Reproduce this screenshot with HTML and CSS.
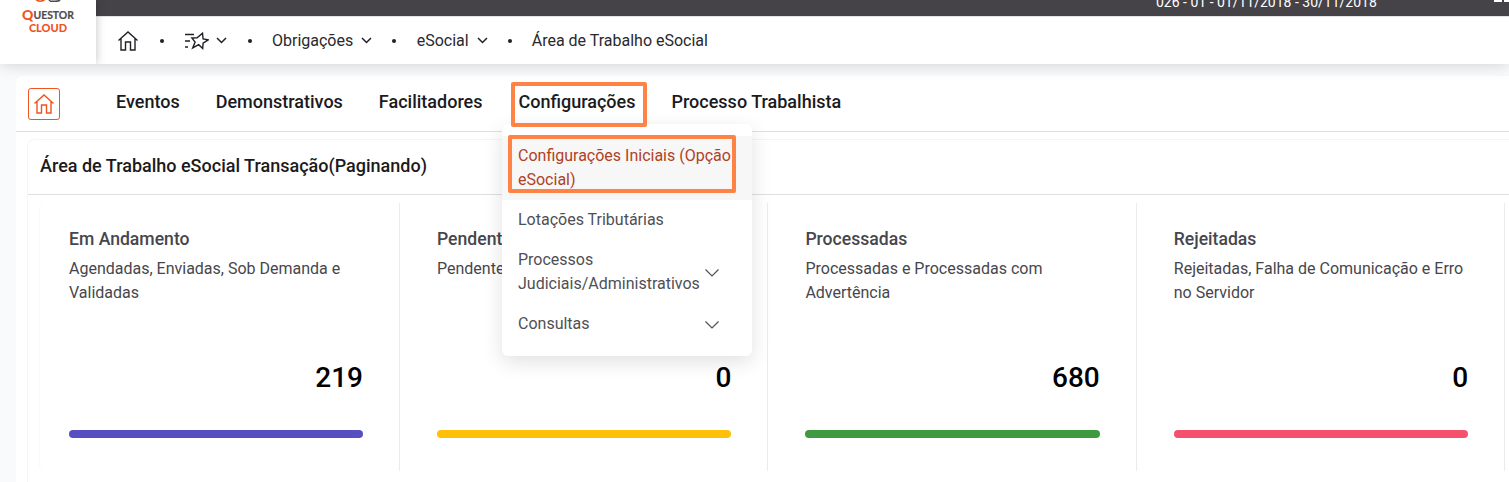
FILE: index.html
```html
<!DOCTYPE html>
<html lang="pt-BR">
<head>
<meta charset="utf-8">
<title>Área de Trabalho eSocial</title>
<link rel="stylesheet" href="styles.css">
</head>
<body>
<div class="page">
  <header class="header">
    <div class="brand">
      <svg class="brand-mark" viewBox="0 0 50 8" width="50" height="8">
        <path d="M12.500 0C14 2.600 20 2.600 22 .3L22 0H18.500Q17 1 16 0Z" fill="#f0531f"/>
        <path d="M26.500 0v1.200M27 1.300h5C36 1.300 36.500.600 37 0" fill="none" stroke="#4d4b52" stroke-width="1.600"/>
      </svg>
      <div class="brand-name"><span class="brand-q">Q</span>UESTOR</div>
      <div class="brand-sub">CLOUD</div>
    </div>
    <div class="header-main">
      <div class="topbar">
        <span class="period">026 - 01 - 01/11/2018 - 30/11/2018</span>
        <svg class="apps" width="15" height="3" viewBox="0 0 15 3"><path d="M0 0h8v2H0zM10 0h5v2h-5z" fill="#fff"/></svg>
      </div>
      <nav class="crumbs">
        <svg class="home" width="22" height="20" viewBox="0 0 22 20"><path d="M1.500 9.500L11 1l9.500 8.500M4 7.500V19h4.500v-8h5v8H18V7.500"/></svg>
        <i class="dot dot-a"></i>
        <svg class="fav" width="25" height="18" viewBox="0 0 25 18"><path d="M1 2.500h9M1 9h5M1 15h3M18.500 1.200l.6 5.800 5 .9-5 3.200-.4 5.400-4-3.800-6 3.200 2.400-5.900-3.200-4 5.200-.2z"/></svg>
        <svg class="chev chev-fav" width="11" height="7" viewBox="0 0 11 7"><path d="M1 1l4.500 4.500L10 1"/></svg>
        <i class="dot dot-b"></i>
        <span>Obrigações</span>
        <svg class="chev" width="11" height="7" viewBox="0 0 11 7"><path d="M1 1l4.500 4.500L10 1"/></svg>
        <i class="dot dot-c"></i>
        <span>eSocial</span>
        <svg class="chev" width="11" height="7" viewBox="0 0 11 7"><path d="M1 1l4.500 4.500L10 1"/></svg>
        <i class="dot dot-d"></i>
        <span>Área de Trabalho eSocial</span>
      </nav>
    </div>
  </header>

  <main class="workspace">
    <nav class="menu">
      <div class="menu-home"><svg class="home" width="22" height="20" viewBox="0 0 22 20"><path d="M1.500 9.500L11 1l9.500 8.500M4 7.500V19h4.500v-8h5v8H18V7.500"/></svg></div>
      <span>Eventos</span>
      <span>Demonstrativos</span>
      <span>Facilitadores</span>
      <div class="menu-open">
        <span>Configurações</span>
        <div class="mark mark-tab"></div>
        <div class="dropdown">
          <div class="option option-active">Configurações Iniciais (Opção eSocial)<div class="mark mark-option"></div></div>
          <div class="option">Lotações Tributárias</div>
          <div class="option option-sub"><span>Processos Judiciais/Administrativos</span>
            <svg class="chev-thin" width="14" height="8" viewBox="0 0 14 8"><path d="M.5.500L7 7 13.500.5"/></svg></div>
          <div class="option option-sub"><span>Consultas</span>
            <svg class="chev-thin" width="14" height="8" viewBox="0 0 14 8"><path d="M.5.500L7 7 13.500.5"/></svg></div>
        </div>
      </div>
      <span>Processo Trabalhista</span>
    </nav>

    <section class="panel">
      <h1 class="panel-title">Área de Trabalho eSocial Transação(Paginando)</h1>
      <div class="cards">
        <article class="card">
          <h2>Em Andamento</h2><p>Agendadas, Enviadas, Sob Demanda e Validadas</p>
          <strong>219</strong><div class="bar bar-purple"></div>
        </article>
        <article class="card">
          <h2>Pendentes</h2><p>Pendentes</p>
          <strong>0</strong><div class="bar bar-yellow"></div>
        </article>
        <article class="card">
          <h2>Processadas</h2><p>Processadas e Processadas com Advertência</p>
          <strong>680</strong><div class="bar bar-green"></div>
        </article>
        <article class="card">
          <h2>Rejeitadas</h2><p>Rejeitadas, Falha de Comunicação e Erro no Servidor</p>
          <strong>0</strong><div class="bar bar-red"></div>
        </article>
      </div>
    </section>
  </main>
</div>
</body>
</html>
```
FILE: styles.css
```css
* { box-sizing: border-box; }
body { margin: 0; background: #f8fafc; font-family: Roboto, "Noto Sans", sans-serif; font-size: 16px; line-height: 24px; color: #47464c; }
.page { width: 1509px; height: 482px; overflow: hidden; }
svg { display: block; flex: none; fill: none; }

.header { display: flex; height: 64px; position: relative; box-shadow: 0 0 16px rgba(0,0,0,.18); background: #fff; }
.brand { width: 96px; height: 64px; flex: none; background: #fff; box-shadow: 0 0 9px rgba(0,0,0,.25); position: relative; display: flex; flex-direction: column; align-items: center; font-family: Lato, sans-serif; font-weight: 900; clip-path: inset(0 -12px 0 0); }
.brand-mark { height: 8px; }
.brand-name { display: flex; align-items: center; height: 14px; font-size: 10.4px; line-height: 14px; font-weight: 700; color: #4d4b52; -webkit-text-stroke: .2px #4d4b52; }
.brand-q { font-size: 14px; font-weight: 900; color: #f0531f; -webkit-text-stroke: 0; }
.brand-sub { font-size: 11px; line-height: 11px; color: #f0531f; }
.header-main { flex: 1; min-width: 0; }
.topbar { height: 16px; background: #454348; display: flex; align-items: flex-start; padding-left: 1060px; }
.period { width: 338px; flex: none; margin-top: -10px; font-size: 14px; color: #fff; white-space: nowrap; }
.crumbs { height: 48px; display: flex; align-items: center; padding-left: 21px; color: #29282d; border-top: 1px solid #e3e3e3; }
.home { stroke: #202126; stroke-width: 1.4; }
.fav { stroke: #202126; stroke-width: 1.4; }
.chev { stroke: #202126; stroke-width: 1.5; margin-left: 8px; }
.chev-fav { margin-left: 7px; }
.dot { width: 4px; height: 4px; border-radius: 50%; background: #202126; flex: none; }
.dot-a { margin: 0 20px 0 21px; }
.dot-b { margin: 0 20px 0 21px; }
.dot-c { margin: 0 20.5px 0 20px; }
.dot-d { margin: 0 20px; }

.workspace { margin: 12px 0 0 16px; height: 406px; background: #fff; border-top-left-radius: 6px; }
.menu { height: 56px; border-bottom: 1px solid #dedfe1; display: flex; align-items: center; padding-left: 12px; gap: 36px; font-size: 18px; font-weight: 500; color: #1b1a20; white-space: nowrap; }
.menu > span, .menu-open > span { position: relative; top: -2px; }
.menu-home { width: 32px; height: 32px; margin-right: 20px; border: 1px solid #f0531f; border-radius: 3px; display: flex; align-items: center; justify-content: center; }
.menu-home .home { stroke: #f0531f; }
.menu-open { position: relative; }
.mark { position: absolute; border: 4px solid #ff8344; border-radius: 2px; }
.mark-tab { left: -8px; top: -9.500px; width: 136px; height: 45px; z-index: 4; }
.mark-option { left: 5.500px; top: -1px; width: 228px; height: 58px; }
.dropdown { position: absolute; z-index: 3; left: -16.500px; top: 32px; width: 250px; height: 232px; padding-top: 12px; background: #fff; border-radius: 6px; box-shadow: 0 6px 20px rgba(0,0,0,.12); font-size: 16px; font-weight: 400; color: #504f55; white-space: normal; }
.option { padding: 8px 16px; position: relative; }
.option-active { background: #f7f7f7; color: #b0421f; height: 64px; }
.option-sub { display: flex; align-items: center; justify-content: space-between; padding-right: 33px; }
.option-sub span { width: 182px; }
.chev-thin { stroke: #504f55; stroke-width: 1.2; margin-top: 2px; }

.panel { margin: 7px 0 0 11px; border-left: 1px solid #f5f5f6; border-top: 1px solid #f5f5f6; border-top-left-radius: 7px; height: 343px; }
.panel-title { margin: 0; height: 55px; padding: 14px 12px 0; border-bottom: 1px solid #dedfe1; font-size: 18px; font-weight: 500; color: #1b1a20; }
.cards { display: grid; grid-template-columns: 360px repeat(3, 368.400px); margin: 8px 0 0 11px; border-left: 1px solid #fafafa; border-radius: 6px; }
.card { height: 268px; border-right: 1px solid #ebebee; padding: 23px 36px 0 37px; display: flex; flex-direction: column; }
.card:first-child { padding-left: 29px; }
.card h2 { margin: 0; font-size: 17.6px; line-height: 26px; font-weight: 500; }
.card p { margin: 5px 0 0; height: 48px; }
.card strong { text-align: right; font-size: 28px; line-height: 34px; font-weight: 500; color: #000; margin-top: 56px; }
.bar { height: 8px; border-radius: 4px; margin-top: 35px; flex: none; }
.bar-purple { background: #574fc1; }
.bar-yellow { background: #ffc00a; }
.bar-green { background: #3f9a3f; }
.bar-red { background: #f5506e; }
```
